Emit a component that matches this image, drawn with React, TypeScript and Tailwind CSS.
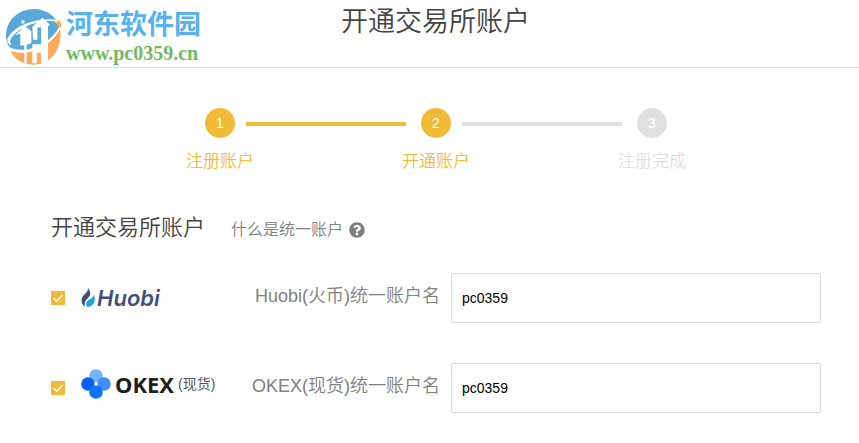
import clsx from "clsx"
import { FaQuestionCircle } from "react-icons/fa"

interface IStep {
  id: number
  name: string
  active: boolean
}

const steps: IStep[] = [
  { id: 1, name: "注册账户", active: true },
  { id: 2, name: "开通账户", active: true },
  { id: 3, name: "注册完成", active: false },
]

const SiteLogo = () => (
  <a href="#" className="absolute left-1 top-2 flex items-center gap-1">
    <svg viewBox="12 30 174 174" className="size-[58px]" aria-hidden="true">
      <path d="M18 118C17 66 56 33 102 33c38 0 68 24 78 56-20 46-90 80-135 68-16-4-26-20-27-39z" fill="#58a8d8" />
      <path d="M178 84c14 50-12 116-78 116-36 0-61-20-73-50 50 20 122-8 151-66z" fill="#f8ac5c" />
      <path d="M150 66c16-4 28-1 34 9 1 8-3 16-8 24 0-16-8-28-26-33z" fill="#f8ac5c" />
      <path d="M22 124C34 92 92 58 168 66c4 1 6 3 4 7-4-3-10-4-17-4C98 68 48 96 33 122c-5 9-3 15 3 20-10-2-16-9-14-18z" fill="#fff" />
      <path d="M27 148c50 22 124-8 151-62l2 6C153 148 82 178 30 158z" fill="#fff" />
      <path d="M46 111l29-27 19 16v36l-14 4v56H73v-54l-12 1v-36z" fill="#fff" />
      <path d="M97 86l30-27 23 21-6 4v112l-21 6v-38h-13v32H97v-57h26V88l-11 1v36H99z" fill="#fff" />
      <path d="M69 64l2 5 6 1-5 3 1 6-4-4-5 3 2-6-4-4h6z" fill="#fff" />
    </svg>
    <span className="flex flex-col">
      <span className="text-[27px] leading-8 font-bold text-[#5ab1f0]">河东软件园</span>
      <span className="font-['Liberation_Serif'] text-xl leading-6 font-bold text-[#71ba62]">www.pc0359.cn</span>
    </span>
  </a>
)

const HuobiLogo = () => (
  <span className="flex items-center gap-0.5">
    <svg viewBox="0 0 14 20" className="h-5 w-3.5" aria-hidden="true">
      <path d="M7 0c3 4 3 7 0 10-3 3-4 5-3 9C0 16-1 11 3 7c3-3 4-4 4-7z" fill="#414f7d" />
      <path d="M13 7c2 6 0 11-7 12-2-4 0-6 3-8 2-1 3-2 4-4z" fill="#1ba4e8" />
    </svg>
    <span className="font-['Inter'] text-[22px] leading-6 font-semibold italic text-[#414f7d]">Huobi</span>
  </span>
)

const OkexLogo = () => (
  <span className="flex items-center gap-1 pb-2">
    <svg viewBox="0 0 30 30" className="size-[30px]" aria-hidden="true">
      <circle cx="15" cy="7" r="6.8" fill="#72b8f8" />
      <circle cx="23" cy="15" r="6.8" fill="#428ffb" />
      <circle cx="7" cy="15" r="6.8" fill="#0560f8" />
      <circle cx="15" cy="23" r="6.8" fill="#0d74f6" />
      <path d="M13.500 13.500h3v3h-3z" fill="#fff" />
    </svg>
    <span className="font-['Noto_Sans'] text-[22px] leading-6 font-bold text-[#1d1e20]">OKEX</span>
    <span className="text-sm text-[#555]">(现货)</span>
  </span>
)

const accounts = [
  { id: "huobi", label: "Huobi(火币)统一账户名", value: "pc0359", logo: <HuobiLogo /> },
  { id: "okex", label: "OKEX(现货)统一账户名", value: "pc0359", logo: <OkexLogo /> },
]

const App = () => {
  return (
    <div className="bg-white font-['Liberation_Sans','Noto_Sans_CJK_SC',sans-serif] text-[#444]">
      <header className="relative border-b border-[#dcdcdc] pt-0.5 pb-[25px] pl-3">
        <SiteLogo />
        <h1 className="text-center text-[27px] leading-10 font-[350]">开通交易所账户</h1>
      </header>

      <main className="pt-10 pb-[30px] pl-[51px] pr-[38px]">
        <ol className="flex justify-center">
          {steps.map((step, i) => (
            <li key={step.id} className="flex">
              {i > 0 && (
                <span className={clsx("mt-3.5 -mr-1 -ml-2 h-1 w-40", step.active ? "bg-[#f1bb38]" : "bg-[#e0e0e0]")} />
              )}
              <div className={clsx("flex w-[68px] flex-col items-center gap-3", step.active ? "text-[#f1bb38]" : "text-[#e0e0e0]")}>
                <span className={clsx("flex size-[30px] items-center justify-center rounded-full", step.active ? "bg-[#f1bb38]" : "bg-[#e0e0e0]")}>
                  <span className="text-sm text-white">{step.id}</span>
                </span>
                <span className="text-[17px] leading-6 font-[350]">{step.name}</span>
              </div>
            </li>
          ))}
        </ol>

        <section>
          <div className="mt-[38px] flex items-center gap-[26px]">
            <h2 className="text-[22px] leading-8 font-[350]">开通交易所账户</h2>
            <a href="#" className="flex items-center gap-1.5 pt-1 text-[#808080]">
              <span className="text-base leading-6 font-[350]">什么是统一账户</span>
              <FaQuestionCircle className="size-4" />
            </a>
          </div>

          <form className="mt-[29px] flex flex-col gap-10">
            {accounts.map((account) => (
              <div key={account.id} className="flex items-center gap-[11px]">
                <div className="flex w-[389px] items-center justify-between">
                  <label className="flex items-center gap-4">
                    <span className="relative flex size-3.5">
                      <input type="checkbox" defaultChecked className="size-3.5 appearance-none bg-[#f1bb38]" aria-label={account.id} />
                      <svg viewBox="0 0 14 14" className="pointer-events-none absolute inset-0 size-3.5" aria-hidden="true">
                        <path d="M2.500 7l3.200 3.300L11.500 4" fill="none" stroke="#fff" strokeWidth="1.300" />
                      </svg>
                    </span>
                    {account.logo}
                  </label>
                  <label htmlFor={account.id} className="pb-1 text-lg leading-6 font-[350] text-[#808080]">{account.label}</label>
                </div>
                <input
                  id={account.id}
                  type="text"
                  defaultValue={account.value}
                  className="h-[50px] min-w-0 flex-1 rounded-xs border border-[#dcdcdc] px-2.5 text-sm text-black"
                />
              </div>
            ))}
          </form>
        </section>
      </main>
    </div>
  )
}

export default App
